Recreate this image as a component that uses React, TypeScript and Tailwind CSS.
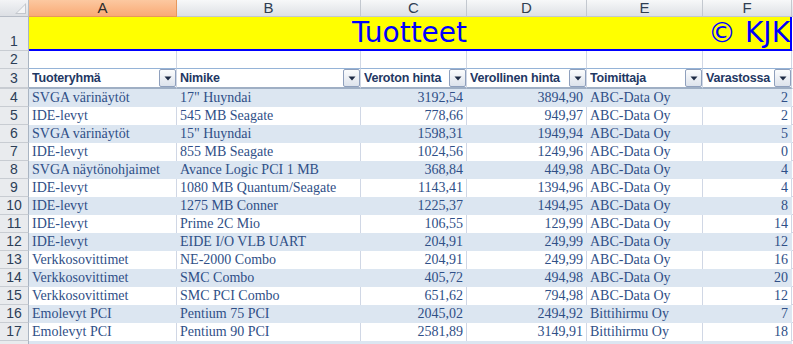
const columns = ["A", "B", "C", "D", "E", "F"];

const headers = ["Tuoteryhmä", "Nimike", "Veroton hinta", "Verollinen hinta", "Toimittaja", "Varastossa"];

const rows: [string, string, string, string, string, string][] = [
  ["SVGA värinäytöt", '17" Huyndai', "3192,54", "3894,90", "ABC-Data Oy", "2"],
  ["IDE-levyt", "545 MB Seagate", "778,66", "949,97", "ABC-Data Oy", "2"],
  ["SVGA värinäytöt", '15" Huyndai', "1598,31", "1949,94", "ABC-Data Oy", "5"],
  ["IDE-levyt", "855 MB Seagate", "1024,56", "1249,96", "ABC-Data Oy", "0"],
  ["SVGA näytönohjaimet", "Avance Logic PCI 1 MB", "368,84", "449,98", "ABC-Data Oy", "4"],
  ["IDE-levyt", "1080 MB Quantum/Seagate", "1143,41", "1394,96", "ABC-Data Oy", "4"],
  ["IDE-levyt", "1275 MB Conner", "1225,37", "1494,95", "ABC-Data Oy", "8"],
  ["IDE-levyt", "Prime 2C Mio", "106,55", "129,99", "ABC-Data Oy", "14"],
  ["IDE-levyt", "EIDE I/O VLB UART", "204,91", "249,99", "ABC-Data Oy", "12"],
  ["Verkkosovittimet", "NE-2000 Combo", "204,91", "249,99", "ABC-Data Oy", "16"],
  ["Verkkosovittimet", "SMC Combo", "405,72", "494,98", "ABC-Data Oy", "20"],
  ["Verkkosovittimet", "SMC PCI Combo", "651,62", "794,98", "ABC-Data Oy", "12"],
  ["Emolevyt PCI", "Pentium 75 PCI", "2045,02", "2494,92", "Bittihirmu Oy", "7"],
  ["Emolevyt PCI", "Pentium 90 PCI", "2581,89", "3149,91", "Bittihirmu Oy", "18"],
];

const numeric = [false, false, true, true, false, true];

const RowHead = ({ n, className = "" }: { n?: number; className?: string }) => (
  <div
    className={`flex justify-center border-r border-b border-r-[#a9b4c2] border-b-[#c8ccd2] bg-[#e9ebee] text-[14px] leading-[17px] text-[#2c3e57] font-['Liberation_Sans',Arial,sans-serif] ${className}`}
  >
    {n}
  </div>
);

const FilterButton = () => (
  <div className="flex h-[18px] w-[17px] shrink-0 items-center justify-center rounded-[2px] border border-[#8fa0bd] bg-gradient-to-b from-[#fbfcfd] to-[#dde3ec]">
    <svg width="8" height="5" viewBox="0 0 8 5">
      <path d="M0.5 0.5h7L4 4.5z" fill="#1e2b45" />
    </svg>
  </div>
);

export default function App() {
  return (
    <div className="h-[344px] w-[793px] overflow-hidden bg-white">
      <div className="grid grid-cols-[29px_148px_184px_106px_120px_116px_89px_1fr] grid-rows-[17px_34px_18px_20px_repeat(15,18px)]">
        {/* column headers */}
        <div className="relative border-r border-b border-[#b6bcc6] bg-gradient-to-b from-[#f3f4f6] to-[#dcdfe4]">
          <svg className="absolute right-[2px] bottom-[2px]" width="11" height="11" viewBox="0 0 11 11">
            <path d="M11 0V11H0z" fill="#c3c7cd" />
            <path d="M10 2V10H2z" fill="#f4f5f7" />
          </svg>
        </div>
        {columns.map((c) => (
          <div
            key={c}
            className={`flex items-center justify-center border-r border-b text-[15px] font-['Liberation_Sans',Arial,sans-serif] ${
              c === "A"
                ? "border-[#e6985c] bg-gradient-to-b from-[#fcc8a0] to-[#f9aa75] text-[#2c2c2c]"
                : "border-[#c3c8cf] bg-gradient-to-b from-[#f7f8f9] to-[#dee1e5] text-[#2f3e52]"
            }`}
          >
            {c}
          </div>
        ))}
        <div className="border-b border-[#c3c8cf] bg-gradient-to-b from-[#f7f8f9] to-[#dee1e5]" />

        {/* row 1: title */}
        <RowHead n={1} className="items-end" />
        <div className="col-span-6 grid grid-cols-[1fr_auto_1fr] items-end border-r-2 border-b-2 border-[#0000ff] bg-[#ffff00] pb-[1px] text-[28px] leading-[30px] text-[#0000ff] font-['DejaVu_Sans',Verdana,sans-serif]">
          <span />
          <span>Tuotteet</span>
          <span className="justify-self-end">© KJK</span>
        </div>
        <div className="border-b border-[#d0d7e5]" />

        {/* row 2 */}
        <RowHead n={2} className="items-center" />
        {columns.map((c) => (
          <div key={c} className="border-r border-b border-r-[#d0d7e5] border-b-[#95b3d7]" />
        ))}
        <div className="border-b border-[#d0d7e5]" />

        {/* row 3: table headers */}
        <RowHead n={3} className="items-center border-b-2 border-b-[#a5adb8]" />
        {headers.map((h) => (
          <div
            key={h}
            className="flex items-start overflow-hidden border-r border-b-2 border-r-[#d0d7e5] border-b-[#9fafc4] pl-[3px]"
          >
            <span className="min-w-0 flex-1 overflow-hidden whitespace-nowrap pt-[1px] text-[12.5px] leading-[17px] font-bold tracking-[-0.2px] text-[#1f3864] font-['Liberation_Sans',Arial,sans-serif]">
              {h}
            </span>
            <FilterButton />
          </div>
        ))}
        <div className="border-b border-[#d0d7e5]" />

        {/* data rows */}
        {rows.map((r, i) => {
          const banded = i % 2 === 0;
          return [
            <RowHead key={`h${i}`} n={i + 4} className="items-center" />,
            ...r.map((v, j) => (
              <div
                key={`${i}-${j}`}
                className={`overflow-hidden whitespace-nowrap border-r px-[3px] text-[14px] leading-[18px] text-[#2f4f87] font-['Liberation_Serif','Times_New_Roman',serif] ${
                  numeric[j] ? "text-right" : "text-left"
                } ${banded ? "border-r-[#dce6f1] bg-[#dce6f1]" : "border-r-[#d0d7e5] bg-white"}`}
              >
                {v}
              </div>
            )),
            <div key={`g${i}`} className="border-b border-[#d0d7e5]" />,
          ];
        })}

        {/* row 18, cut by the window edge */}
        <RowHead />
        {columns.map((c) => (
          <div key={c} className="border-r border-r-[#dce6f1] bg-[#dce6f1]" />
        ))}
        <div />
      </div>
    </div>
  );
}
